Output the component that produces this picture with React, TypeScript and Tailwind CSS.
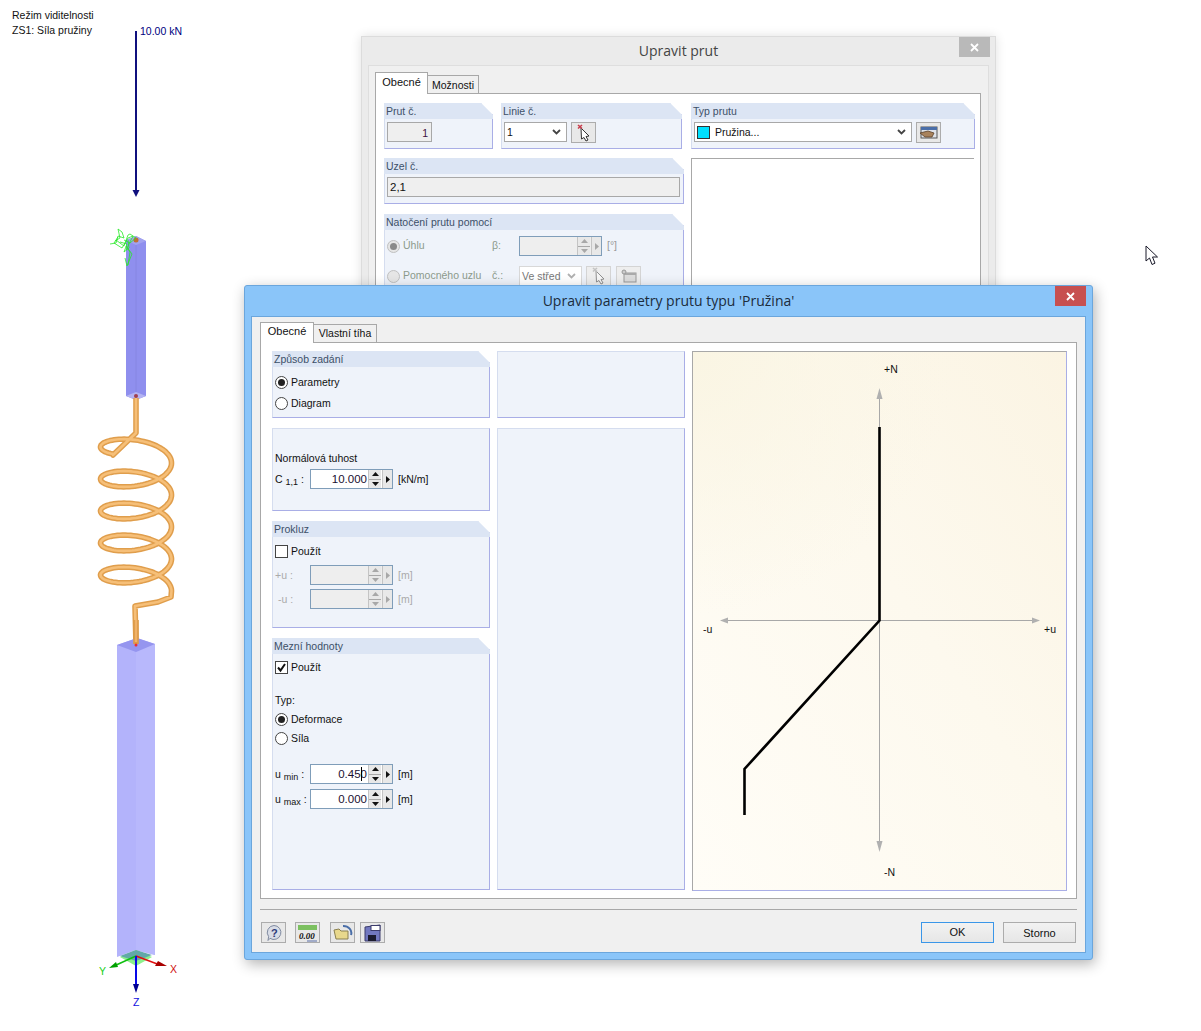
import React from "react";

// helix of the spring, drawn as one polyline
function springPath() {
  const pts: string[] = ["136,398", "136,433", "113,455"];
  const start = -Math.PI - 0.85;
  const end = Math.PI * 8;
  for (let t = start; t <= end; t += 0.08) {
    const x = 136 + 35.5 * Math.cos(t);
    const y = 463 + (32 * t) / (2 * Math.PI) + 15 * Math.sin(t);
    pts.push(`${x.toFixed(1)},${y.toFixed(1)}`);
  }
  pts.push("171,597", "158,602", "135,606", "136,645");
  return pts.join(" ");
}

function Scene() {
  const spring = springPath();
  return (
    <svg className="absolute left-0 top-0" width="240" height="1031" viewBox="0 0 240 1031">
      <text x="12" y="19" fontSize="10.5" fill="#111">Režim viditelnosti</text>
      <text x="12" y="34" fontSize="10.5" fill="#111">ZS1: Síla pružiny</text>
      <text x="140" y="35" fontSize="10.5" fill="#000080">10.00 kN</text>
      <line x1="136" y1="31" x2="136" y2="192" stroke="#10107e" strokeWidth="2" />
      <polygon points="132.5,190 139.5,190 136,197" fill="#10107e" />

      {/* upper bar */}
      <polygon points="126,240 136,236 146,241 146,396 136,400 126,396" fill="#8f8fee" />
      <line x1="136" y1="245" x2="136" y2="396" stroke="#8686e2" />
      <polygon points="126,396 136,392 146,396 136,400" fill="#b4b4f2" />
      <polygon points="126,240 136,236 146,241 136,245" fill="#a2a2ef" />
      <circle cx="136" cy="240" r="2.5" fill="#c07030" />
      <circle cx="136" cy="396" r="2" fill="#a04050" />
      <g fill="none" stroke="#27e827" strokeWidth="0.8">
        <polyline points="110,244 116,243 118,236 124,238 122,232 118,229 120,238 115,241" />
        <polyline points="116,240 124,246 128,235 130,234 136,238 130,243 124,240" />
        <polyline points="128,265 130,252 126,246 132,254 127,266 125,258" />
        <polyline points="118,237 114,243 122,248 128,238 133,236 126,250" />
        <polyline points="120,242 127,244 124,252 129,248 128,240" />
      </g>

      {/* spring */}
      <polyline points={spring} fill="none" stroke="#e09e4c" strokeWidth="5.6" strokeLinejoin="round" />
      <polyline points={spring} fill="none" stroke="#f6bf78" strokeWidth="2.6" strokeLinejoin="round" />

      {/* lower bar */}
      <polygon points="117,645 137,638 155,644 155,955 136,950 117,957" fill="#b3b3fb" />
      <polygon points="136,652 155,644 155,955 136,950" fill="#b8b8fc" />
      <polygon points="117,645 137,638 155,644 136,652" fill="#9595ef" />
      <line x1="136" y1="620" x2="136" y2="644" stroke="#dc9a48" strokeWidth="5.6" />
      <line x1="136" y1="620" x2="136" y2="642" stroke="#f0b268" strokeWidth="2.4" />
      <circle cx="136" cy="645" r="1.5" fill="#ee3030" />

      {/* base and axes */}
      <polygon points="120,957 136,950 152,957 136,966" fill="#8cf08c" />
      <polygon points="120,956 136,950 152,955 136,961" fill="#62a8a8" />
      <line x1="136" y1="956" x2="160" y2="965" stroke="#e01010" strokeWidth="1.5" />
      <polygon points="158,961 167,966 155,966" fill="#a80000" />
      <line x1="136" y1="956" x2="114" y2="966" stroke="#10c010" strokeWidth="1.5" />
      <polygon points="109,968 116,962 118,967" fill="#00a000" />
      <line x1="136" y1="956" x2="136" y2="985" stroke="#0808e8" strokeWidth="2" />
      <polygon points="133,984 139,984 136,993" fill="#000090" />
      <text x="170" y="973" fontSize="10.5" fill="#d01010">X</text>
      <text x="99" y="975" fontSize="10.5" fill="#20d020">Y</text>
      <text x="133" y="1006" fontSize="10.5" fill="#1010e0">Z</text>
    </svg>
  );
}

function Panel({
  title,
  className,
  children,
}: {
  title?: string;
  className: string;
  children?: React.ReactNode;
}) {
  return (
    <div
      className={`bg-[#eff3fa] border-l border-t border-[#d5ddef] border-r-[#a9aee6] border-b-[#a9aee6] [border-right-width:1px] [border-bottom-width:1px] ${
        title ? "[clip-path:polygon(0_0,calc(100%-12px)_0,100%_12px,100%_100%,0_100%)]" : ""
      } ${className}`}
    >
      {title && (
        <div className="h-[16px] -mt-px -ml-px -mr-px bg-[#dce5f4] pl-[2px] leading-[17px] text-[#3c5068]">
          {title}
        </div>
      )}
      {children}
    </div>
  );
}

function UpDown({ dim }: { dim?: boolean }) {
  const c = dim ? "#a8a8a8" : "#111";
  return (
    <>
      <div className="w-[13px] h-full flex flex-col border-l border-[#c4c4c4] bg-[#e8e8e8]">
        <div className="flex-1 flex items-center justify-center border-b border-[#a8a8a8]">
          <svg width="7" height="4"><polygon points="3.5,0 7,4 0,4" fill={c} /></svg>
        </div>
        <div className="flex-1 flex items-center justify-center">
          <svg width="7" height="4"><polygon points="0,0 7,0 3.5,4" fill={c} /></svg>
        </div>
      </div>
      <div className="w-[10px] h-full ml-px flex items-center justify-center border-l border-[#c4c4c4] bg-[#e8e8e8]">
        <svg width="4" height="7"><polygon points="0,0 4,3.5 0,7" fill={c} /></svg>
      </div>
    </>
  );
}

function Spin({ value, dim, caret }: { value?: string; dim?: boolean; caret?: boolean }) {
  return (
    <div
      className={`w-[83px] h-[20px] shrink-0 flex border border-[#7f9db9] ${dim ? "bg-[#eeeeee]" : "bg-white"}`}
    >
      <div className="relative flex-1 text-right pr-px leading-[18px] text-[11.5px] text-[#1a1030]">
        {value}
        {caret && <span className="absolute right-[6px] top-[2px] h-[14px] w-px bg-black" />}
      </div>
      <UpDown dim={dim} />
    </div>
  );
}

function Radio({ label, on, dim }: { label: string; on?: boolean; dim?: boolean }) {
  return (
    <div className={`flex items-center gap-[3px] ${dim ? "text-[#8c9a8c]" : ""}`}>
      <span
        className={`w-[13px] h-[13px] rounded-full border flex items-center justify-center ${
          dim ? "border-[#c0c0c0] bg-[#e6e6e6]" : "border-[#444] bg-white"
        }`}
      >
        {on && <span className={`w-[7px] h-[7px] rounded-full ${dim ? "bg-[#8a8a8a]" : "bg-[#222]"}`} />}
      </span>
      {label}
    </div>
  );
}

function Check({ on }: { on?: boolean }) {
  return (
    <div className="flex items-center gap-[3px]">
      <span className="w-[13px] h-[13px] border border-[#444] bg-white flex items-center justify-center">
        {on && (
          <svg width="11" height="11" viewBox="0 0 11 11">
            <polyline points="2,5.5 4.5,8.5 9,2" fill="none" stroke="#111" strokeWidth="2" />
          </svg>
        )}
      </span>
      <span className="pt-px">Použít</span>
    </div>
  );
}

function Chevron({ dim }: { dim?: boolean }) {
  return (
    <svg width="9" height="6" viewBox="0 0 9 6">
      <polyline points="1,1 4.5,4.5 8,1" fill="none" stroke={dim ? "#b0b0b0" : "#444"} strokeWidth="1.8" />
    </svg>
  );
}

function PickIcon({ dim }: { dim?: boolean }) {
  return (
    <svg width="17" height="18" viewBox="0 0 17 18" className={dim ? "opacity-50" : ""}>
      <path d="M6 4 L14 12 L11 12.5 L13 16 L11 17 L9 13.5 L6.5 15 Z" fill="#fff" stroke="#333" strokeWidth="1" />
      <path d="M3 1 L7 4.5 M7 1 L3 4.5" stroke={dim ? "#999" : "#c83c4c"} strokeWidth="1.6" />
    </svg>
  );
}

function ToolBtn({ children, className = "" }: { children: React.ReactNode; className?: string }) {
  return (
    <div
      className={`w-[25px] h-[21px] shrink-0 border border-[#acacac] bg-[#e8e8e8] flex items-center justify-center ${className}`}
    >
      {children}
    </div>
  );
}

function Dropdown({
  className,
  children,
  dim,
}: {
  className: string;
  children: React.ReactNode;
  dim?: boolean;
}) {
  return (
    <div
      className={`h-[20px] shrink-0 flex items-center justify-between pl-[2px] pr-[5px] border bg-white ${
        dim ? "border-[#d8d8d8] text-[#777]" : "border-[#a8a8a8]"
      } ${className}`}
    >
      <div className="flex items-center pt-[2px]">{children}</div>
      <Chevron dim={dim} />
    </div>
  );
}

function BackDialog() {
  return (
    <div className="absolute left-[361px] top-[36px] w-[635px] h-[300px] bg-[#ebebeb] border border-[#dcdcdc] shadow-[0_0_10px_rgba(0,0,0,0.12)]">
      <div className="relative h-[28px] pb-[2px] flex items-center justify-center font-['Open_Sans',sans-serif] text-[14px] text-[#444]">
        Upravit prut
        <div className="absolute right-[5px] top-0 w-[31px] h-[20px] bg-[#b9b9b9] flex items-center justify-center">
          <svg width="9" height="9"><path d="M1 1 L8 8 M8 1 L1 8" stroke="#fff" strokeWidth="1.8" /></svg>
        </div>
      </div>
      <div className="mx-[6px] h-[262px] bg-[#f0f0f0] border border-[#dedede] pt-[6px] pl-[6px] pr-[7px]">
        <div className="flex items-end h-[21px]">
          <div className="relative z-10 w-[53px] h-[22px] -mb-px bg-white border border-b-0 border-[#a8a8a8] text-center leading-[19px] text-[11px]">
            Obecné
          </div>
          <div className="w-[51px] h-[18px] border border-l-0 border-b-0 border-[#a8a8a8] bg-[#f0f0f0] text-center leading-[18px]">
            Možnosti
          </div>
        </div>
        <div className="h-[240px] bg-white border border-[#a8a8a8] pt-[9px] pl-[8px]">
          <div className="flex">
            <Panel title="Prut č." className="w-[109px] h-[46px] shrink-0">
              <div className="ml-[2px] mt-[3px] w-[45px] h-[20px] border border-[#a8a8a8] bg-[#efefef] text-right pr-[3px] leading-[20px] text-[#401040]">
                1
              </div>
            </Panel>
            <Panel title="Linie č." className="ml-[8px] w-[181px] h-[46px] shrink-0">
              <div className="ml-[2px] mt-[3px] flex gap-[4px]">
                <Dropdown className="w-[63px]">1</Dropdown>
                <ToolBtn className="h-[20px]">
                  <PickIcon />
                </ToolBtn>
              </div>
            </Panel>
            <Panel title="Typ prutu" className="ml-[9px] w-[284px] h-[46px] shrink-0">
              <div className="ml-[2px] mt-[3px] flex gap-[4px]">
                <Dropdown className="w-[218px]">
                  <span className="w-[13px] h-[13px] bg-[#00e0ff] border border-[#333] mr-[5px] -mt-px" />
                  Pružina...
                </Dropdown>
                <ToolBtn>
                  <svg width="20" height="16" viewBox="0 0 20 16">
                    <rect x="2" y="2" width="16" height="11" fill="#dfe3ea" stroke="#555" />
                    <rect x="2" y="2" width="16" height="3" fill="#4a6ea8" />
                    <path d="M1 8 L9 6 L15 8 L13 12 L6 12 Z" fill="#a8825c" stroke="#5a4028" strokeWidth="0.8" />
                  </svg>
                </ToolBtn>
              </div>
            </Panel>
          </div>
          <div className="flex mt-[9px]">
            <div className="w-[300px] shrink-0 flex flex-col gap-[10px]">
              <Panel title="Uzel č." className="h-[46px]">
                <div className="ml-[2px] mr-[3px] mt-[3px] h-[20px] border border-[#a8a8a8] bg-[#efefef] pl-[2px] leading-[18px] text-[11.5px]">
                  2,1
                </div>
              </Panel>
              <Panel title="Natočení prutu pomocí" className="h-[90px]">
                <div className="pl-[2px] flex items-center h-[20px] mt-[6px]">
                  <div className="w-[105px]">
                    <Radio label="Úhlu" on dim />
                  </div>
                  <span className="w-[27px] text-[#8c9a8c]">β:</span>
                  <div className="w-[83px] h-[20px] flex border border-[#7f9db9] bg-[#eeeeee]">
                    <div className="flex-1" />
                    <UpDown dim />
                  </div>
                  <span className="ml-[5px] text-[#999]">[°]</span>
                </div>
                <div className="pl-[2px] flex items-center h-[20px] mt-[10px]">
                  <div className="w-[105px]">
                    <Radio label="Pomocného uzlu" dim />
                  </div>
                  <span className="w-[27px] text-[#8c9a8c]">č.:</span>
                  <Dropdown className="w-[63px]" dim>
                    Ve střed
                  </Dropdown>
                  <ToolBtn className="ml-[4px] h-[20px] bg-[#eeeeee] border-[#d4d4d4]">
                    <PickIcon dim />
                  </ToolBtn>
                  <ToolBtn className="ml-[5px] h-[20px] bg-[#eeeeee] border-[#d4d4d4]">
                    <svg width="16" height="14" viewBox="0 0 16 14">
                      <rect x="3" y="4" width="12" height="9" fill="#ddd" stroke="#999" />
                      <rect x="3" y="4" width="12" height="2" fill="#aaa" />
                      <circle cx="3" cy="3" r="2" fill="#ccc" stroke="#999" />
                    </svg>
                  </ToolBtn>
                </div>
              </Panel>
            </div>
            <div className="ml-[7px] w-[283px] h-[200px] border-l border-t border-[#a8a8a8]" />
          </div>
        </div>
      </div>
    </div>
  );
}

function Diagram() {
  return (
    <svg width="373" height="538" viewBox="693 352 373 538" className="block">
      <g stroke="#a8a8a8" strokeWidth="1">
        <line x1="879.5" y1="392" x2="879.5" y2="848" />
        <line x1="724" y1="620.5" x2="1036" y2="620.5" />
      </g>
      <g fill="#b0b0b0">
        <polygon points="879.5,388 876.5,399 882.5,399" />
        <polygon points="879.5,852 876.5,841 882.5,841" />
        <polygon points="720,620.5 728,617.5 728,623.5" />
        <polygon points="1040,620.5 1032,617.5 1032,623.5" />
      </g>
      <polyline points="879.5,427 879.5,620.5 744.5,769 744.5,815" fill="none" stroke="#000" strokeWidth="2.6" />
      <g fontSize="10.5" fill="#111">
        <text x="884" y="373">+N</text>
        <text x="884" y="876">-N</text>
        <text x="703" y="633">-u</text>
        <text x="1044" y="633">+u</text>
      </g>
    </svg>
  );
}

function FrontDialog() {
  return (
    <div className="absolute left-[244px] top-[285px] w-[849px] h-[675px] rounded-[3px] bg-[#8ac5f9] border border-[#6ba6dc] shadow-[2px_4px_14px_rgba(0,0,0,0.3)]">
      <div className="relative h-[30px] pb-[2px] flex items-center justify-center font-['Open_Sans',sans-serif] text-[14px] text-[#1c2c3c]">
        Upravit parametry prutu typu 'Pružina'
        <div className="absolute right-[6px] top-0 w-[31px] h-[20px] bg-[#c75050] flex items-center justify-center">
          <svg width="9" height="9"><path d="M1 1 L8 8 M8 1 L1 8" stroke="#fff" strokeWidth="1.8" /></svg>
        </div>
      </div>
      <div className="mx-[6px] w-[835px] h-[637px] bg-[#f0f0f0] border border-[#6ba6dc] pt-[4px] pl-[8px]">
        <div className="flex items-end h-[21px]">
          <div className="relative z-10 w-[54px] h-[21px] -mb-px bg-white border border-b-0 border-[#a8a8a8] text-center leading-[17px] text-[11px]">
            Obecné
          </div>
          <div className="w-[63px] h-[18px] border border-l-0 border-b-0 border-[#a8a8a8] bg-[#f0f0f0] text-center leading-[17px]">
            Vlastní tíha
          </div>
        </div>
        <div className="w-[817px] h-[557px] bg-white border border-[#a8a8a8] pt-[8px] pl-[11px] flex">
          <div className="w-[218px] shrink-0 flex flex-col gap-[10px]">
            <Panel title="Způsob zadání" className="h-[67px]">
              <div className="pl-[2px] pt-[5px]">
                <div className="h-[21px] flex items-center">
                  <Radio label="Parametry" on />
                </div>
                <div className="h-[21px] flex items-center">
                  <Radio label="Diagram" />
                </div>
              </div>
            </Panel>
            <Panel className="h-[83px]">
              <div className="pl-[2px] pt-[20px]">
                <div className="h-[20px] flex items-center">Normálová tuhost</div>
                <div className="h-[20px] flex items-center">
                  <span className="w-[35px] pt-px">
                    C <sub className="text-[9px]">1,1</sub> :
                  </span>
                  <Spin value="10.000" />
                  <span className="ml-[5px] pt-px">[kN/m]</span>
                </div>
              </div>
            </Panel>
            <Panel title="Prokluz" className="h-[107px]">
              <div className="pl-[2px] pt-[4px]">
                <div className="h-[20px] flex items-center">
                  <Check />
                </div>
                <div className="mt-[4px] h-[20px] flex items-center text-[#aaaaaa]">
                  <span className="w-[35px] pt-px">+u :</span>
                  <Spin dim />
                  <span className="ml-[5px] pt-px">[m]</span>
                </div>
                <div className="mt-[4px] h-[20px] flex items-center text-[#aaaaaa]">
                  <span className="w-[35px] pl-[3px] pt-px">-u :</span>
                  <Spin dim />
                  <span className="ml-[5px] pt-px">[m]</span>
                </div>
              </div>
            </Panel>
            <Panel title="Mezní hodnoty" className="h-[252px]">
              <div className="pl-[2px] pt-[3px]">
                <div className="h-[20px] flex items-center">
                  <Check on />
                </div>
                <div className="mt-[14px] h-[19px] flex items-center">Typ:</div>
                <div className="h-[19px] flex items-center">
                  <Radio label="Deformace" on />
                </div>
                <div className="h-[19px] flex items-center">
                  <Radio label="Síla" />
                </div>
                <div className="mt-[16px] h-[20px] flex items-center">
                  <span className="w-[35px] pt-px">
                    u <sub className="text-[9px]">min</sub> :
                  </span>
                  <Spin value="0.450" caret />
                  <span className="ml-[5px] pt-[2px]">[m]</span>
                </div>
                <div className="mt-[5px] h-[20px] flex items-center">
                  <span className="w-[35px] pt-px">
                    u <sub className="text-[9px]">max</sub> :
                  </span>
                  <Spin value="0.000" />
                  <span className="ml-[5px] pt-px">[m]</span>
                </div>
              </div>
            </Panel>
          </div>
          <div className="ml-[7px] w-[188px] shrink-0 flex flex-col gap-[10px]">
            <Panel className="h-[67px]" />
            <Panel className="h-[462px]" />
          </div>
          <div className="ml-[7px] w-[375px] h-[540px] shrink-0 border border-[#a8a8a8] border-r-[#a9aee6] border-b-[#a9aee6] bg-[radial-gradient(circle_at_0_0,#faf5e3,transparent_40%),linear-gradient(to_top_right,#fffdf7,#fdf9ee_55%,#fbf4e3)]">
            <Diagram />
          </div>
        </div>
        <div className="mt-[10px] w-[817px] h-px bg-[#a8a8a8]" />
        <div className="mt-[12px] w-[817px] flex items-center">
          <ToolBtn className="ml-px">
            <svg width="18" height="18" viewBox="0 0 18 18">
              <path d="M9 1.5 a7 7 0 1 1 -4 12.8 L3 16.5 L3.6 12.6 A7 7 0 0 1 9 1.5 Z" fill="#d8dce6" stroke="#7f8aa0" />
              <text x="6" y="13" fontSize="11" fontWeight="700" fill="#2c3a78">?</text>
            </svg>
          </ToolBtn>
          <ToolBtn className="ml-[9px]">
            <svg width="22" height="18" viewBox="0 0 22 18">
              <rect x="1" y="1" width="19" height="5" fill="#7cc060" />
              <text x="2" y="15" fontSize="9" fontStyle="italic" fontWeight="700" fontFamily="'Liberation Serif', serif" fill="#111">
                0.00
              </text>
              <line x1="10" y1="17" x2="20" y2="17" stroke="#5a6ea8" />
            </svg>
          </ToolBtn>
          <ToolBtn className="ml-[10px]">
            <svg width="20" height="18" viewBox="0 0 20 18">
              <path d="M10 2 A8 7 0 0 1 18 11" fill="none" stroke="#4a6ea8" strokeWidth="2" />
              <path d="M1 6 L6 5 L8 7 L15 7 L15 15 L3 15 Z" fill="#e8d88c" stroke="#8a8050" />
            </svg>
          </ToolBtn>
          <ToolBtn className="ml-[5px]">
            <svg width="18" height="18" viewBox="0 0 18 18">
              <path d="M1 3 L16 1 L16 17 L1 17 Z" fill="#7278c0" stroke="#3c3c6c" />
              <rect x="7" y="1.5" width="9" height="5" fill="#fff" stroke="#3c3c6c" />
              <rect x="4" y="11" width="8" height="6" fill="#1c1c30" />
            </svg>
          </ToolBtn>
          <div className="ml-[536px] w-[73px] h-[21px] border-[1.5px] border-[#3a96e8] bg-[linear-gradient(#f2f2f2,#e6e6e6)] text-center leading-[19px] text-[11px]">
            OK
          </div>
          <div className="ml-[9px] w-[73px] h-[21px] border border-[#acacac] bg-[linear-gradient(#f2f2f2,#e6e6e6)] text-center leading-[20px] text-[11px]">
            Storno
          </div>
        </div>
      </div>
    </div>
  );
}

export default function App() {
  return (
    <div className="relative w-[1201px] h-[1031px] bg-white overflow-hidden font-['Liberation_Sans',sans-serif] text-[10.5px] text-[#111]">
      <Scene />
      <BackDialog />
      <FrontDialog />
      {/* mouse cursor */}
      <svg className="absolute left-[1145px] top-[245px]" width="14" height="21" viewBox="0 0 14 21">
        <path d="M1 1 L1 16 L4.5 13 L7 19.5 L10 18.2 L7.5 12 L12.5 12 Z" fill="#fff" stroke="#1a1a2a" strokeWidth="1" />
      </svg>
    </div>
  );
}
